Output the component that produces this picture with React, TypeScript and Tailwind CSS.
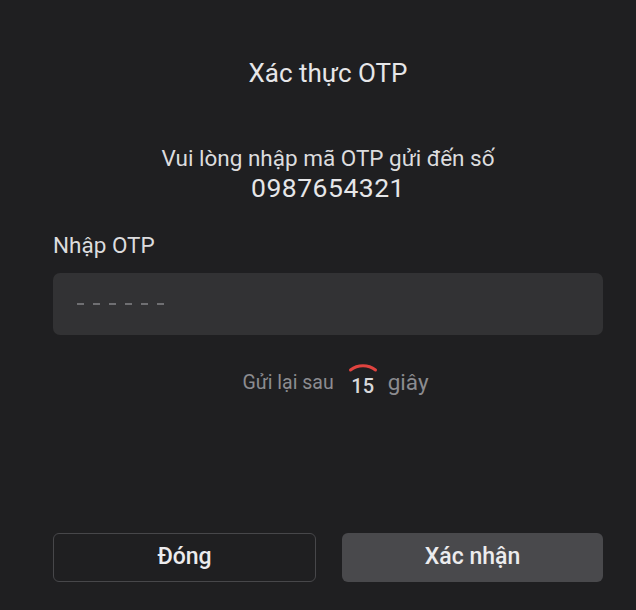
import React from "react";

const Spinner = ({ value }: { value: number }) => (
  <div className="relative w-10 h-10 flex items-center justify-center">
    <svg className="absolute inset-0" width="40" height="40" viewBox="0 0 40 40">
      <path d="M 7.5 5 A 21 21 0 0 1 32.5 5" fill="none" stroke="#e0433f" strokeWidth="3" strokeLinecap="round" transform="translate(0 2)" />
    </svg>
    <span className="text-[20px] font-medium text-[#d8d8da] mt-[6px]">{value}</span>
  </div>
);

export default function App() {
  return (
    <div
      className="w-[636px] h-[610px] bg-[#1f1f21] text-[#e6e6e8] flex flex-col pl-[53px] pr-[33px] pt-[57px]"
      style={{ fontFamily: "Roboto, 'Noto Sans', sans-serif" }}
    >
      <h1 className="text-center text-[26px] leading-[32px]">Xác thực OTP</h1>

      <div className="mt-[54px] text-center">
        <p className="text-[22.5px] leading-[30px] text-[#dcdcde]">Vui lòng nhập mã OTP gửi đến số</p>
        <p className="text-[26.5px] leading-[30px] tracking-[0.5px]">0987654321</p>
      </div>

      <label className="mt-[28px] text-[22.5px] leading-[28px] text-[#dcdcde]">Nhập OTP</label>
      <div className="mt-[14px] h-[62px] rounded-[7px] bg-[#323234] flex items-center gap-[9px] px-[24px]">
        {[0, 1, 2, 3, 4, 5].map((i) => (
          <span key={i} className="w-[7px] h-[2px] bg-[#6f6f72]" />
        ))}
      </div>

      <div className="mt-[28px] flex items-center justify-center gap-[5px] pl-[15px]">
        <span className="text-[19.5px] text-[#8c8c90] mr-[4px]">Gửi lại sau</span>
        <Spinner value={15} />
        <span className="text-[22.5px] text-[#8c8c90]">giây</span>
      </div>

      <div className="mt-auto mb-[28px] flex gap-[26px]">
        <button className="flex-1 h-[49px] rounded-[6px] border border-[#47474a] bg-transparent text-[23px] font-medium text-[#ececee]">
          Đóng
        </button>
        <button className="flex-1 h-[49px] rounded-[6px] bg-[#49494c] text-[23px] font-medium text-[#ececee]">
          Xác nhận
        </button>
      </div>
    </div>
  );
}
